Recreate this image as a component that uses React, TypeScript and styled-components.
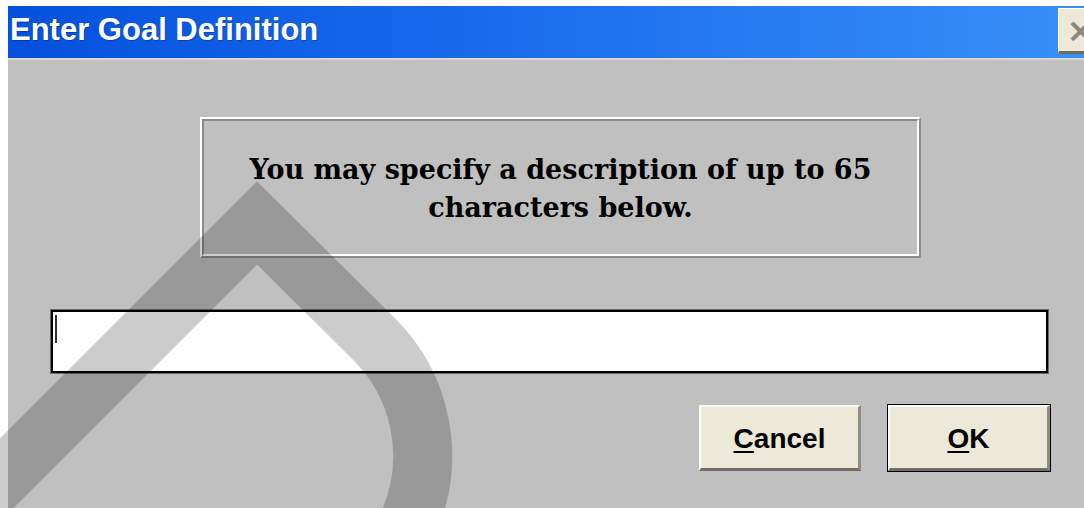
import React from 'react';
import styled, { createGlobalStyle } from 'styled-components';

const GlobalStyle = createGlobalStyle`
  html, body {
    margin: 0;
    padding: 0;
    overflow: hidden;
    background: #ffffff;
  }
  body {
    padding: 6px 0 0 8px;
    width: 1084px;
    height: 508px;
    box-sizing: border-box;
  }
`;

const App = () => {
  return (
    <>
      <GlobalStyle />
      <Dialog>
        <TitleBar>
          <Title>Enter Goal Definition</Title>
          <CloseButton>×</CloseButton>
        </TitleBar>

        <Body>
          <InfoPanel>
            <InfoInner>
              <InfoText>
                You may specify a description of up to 65
                <br />
                characters below.
              </InfoText>
            </InfoInner>
          </InfoPanel>

          <TextField>
            <Caret />
          </TextField>

          <ButtonRow>
            <Button>
              <Key>C</Key>ancel
            </Button>
            <Button $isDefault>
              <Key>O</Key>K
            </Button>
          </ButtonRow>
        </Body>
      </Dialog>

      {/* watermark drawn across the whole window */}
      <Watermark width='1084' height='508' viewBox='0 0 1084 508'>
        <path
          d='M -150 630 L 257 223 L 374 339 A 165 165 0 0 1 257 621'
          fill='none'
          stroke='rgba(0,0,0,0.2)'
          strokeWidth='59'
          strokeLinejoin='miter'
        />
      </Watermark>
    </>
  );
};

const Dialog = styled.div`
  width: 1100px;
  display: flex;
  flex-direction: column;
  background: #c0c0c0;
  min-height: 520px;
`;

const TitleBar = styled.div`
  height: 52px;
  display: flex;
  align-items: center;
  justify-content: space-between;
  padding: 0 4px 0 2px;
  background: linear-gradient(to right, #0450dc 0%, #1a6cec 45%, #3a90fa 100%);
  border-bottom: 2px solid #dcd9cc;
`;

const Title = styled.span`
  font-family: 'Liberation Sans', Arial, sans-serif;
  font-weight: 700;
  font-size: 31px;
  color: #ffffff;
  margin-top: -4px;
  text-shadow: 1px 1px 0 rgba(0, 0, 60, 0.25);
`;

const CloseButton = styled.div`
  width: 46px;
  height: 46px;
  box-sizing: border-box;
  display: flex;
  align-items: center;
  justify-content: center;
  background: #ece9d8;
  border-top: 1px solid #ffffff;
  border-left: 1px solid #ffffff;
  border-bottom: 3px solid #6f6d62;
  border-right: 2px solid #9d9a8b;
  font-family: 'DejaVu Sans', sans-serif;
  font-weight: 700;
  font-size: 34px;
  color: #8c8a80;
  margin-bottom: 2px;
`;

const Body = styled.div`
  display: flex;
  flex-direction: column;
  padding: 57px 0 0 42px;
`;

const InfoPanel = styled.div`
  margin-left: 150px;
  width: 721px;
  height: 141px;
  box-sizing: border-box;
  border: 2px solid;
  border-color: #ffffff #8a8a8a #8a8a8a #ffffff;
`;

const InfoInner = styled.div`
  height: 100%;
  box-sizing: border-box;
  border: 2px solid;
  border-color: #8a8a8a #ffffff #ffffff #8a8a8a;
  display: flex;
  align-items: center;
  justify-content: center;
  padding-top: 3px;
`;

const InfoText = styled.p`
  margin: 0;
  text-align: center;
  font-family: 'DejaVu Serif', 'Liberation Serif', serif;
  font-weight: 700;
  font-size: 27px;
  line-height: 38px;
  color: #000000;
`;

const TextField = styled.div`
  margin-top: 51px;
  width: 999px;
  height: 65px;
  box-sizing: border-box;
  background: #ffffff;
  border: 1px solid #6a6a6a;
  box-shadow: inset 0 0 0 2px #000000;
  padding: 5px 0 0 4px;
`;

const Caret = styled.div`
  width: 2px;
  height: 28px;
  background: #303030;
`;

const ButtonRow = styled.div`
  display: flex;
  justify-content: flex-end;
  gap: 27px;
  width: 1000px;
  margin-top: 31px;
`;

const Button = styled.div<{ $isDefault?: boolean }>`
  width: 162px;
  height: 66px;
  box-sizing: border-box;
  display: flex;
  align-items: center;
  justify-content: center;
  background: #ece9d8;
  border-top: 2px solid #ffffff;
  border-left: 2px solid #ffffff;
  border-bottom: 3px solid #716f64;
  border-right: 3px solid #8f8c7e;
  outline: ${p => (p.$isDefault ? '1px solid #000000' : 'none')};
  outline-offset: 0;
  font-family: 'Liberation Sans', Arial, sans-serif;
  font-weight: 700;
  font-size: 28px;
  color: #000000;
  padding-top: 2px;
`;

const Key = styled.span`
  text-decoration: underline;
  text-decoration-thickness: 2px;
  text-underline-offset: 3px;
`;

const Watermark = styled.svg`
  position: absolute;
  top: 0;
  left: 0;
  pointer-events: none;
`;

export default App;
